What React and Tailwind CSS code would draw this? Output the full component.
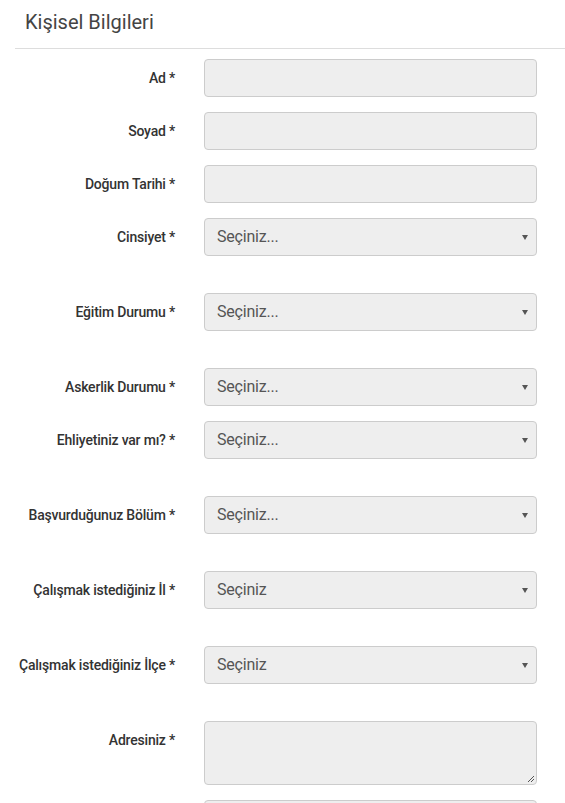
import React from 'react';

const fields = [
  { label: 'Ad *', type: 'input' },
  { label: 'Soyad *', type: 'input' },
  { label: 'Doğum Tarihi *', type: 'input' },
  { label: 'Cinsiyet *', type: 'select', value: 'Seçiniz...', gap: true },
  { label: 'Eğitim Durumu *', type: 'select', value: 'Seçiniz...', gap: true },
  { label: 'Askerlik Durumu *', type: 'select', value: 'Seçiniz...' },
  { label: 'Ehliyetiniz var mı? *', type: 'select', value: 'Seçiniz...', gap: true },
  { label: 'Başvurduğunuz Bölüm *', type: 'select', value: 'Seçiniz...', gap: true },
  { label: 'Çalışmak istediğiniz İl *', type: 'select', value: 'Seçiniz', gap: true },
  { label: 'Çalışmak istediğiniz İlçe *', type: 'select', value: 'Seçiniz', gap: true },
  { label: 'Adresiniz *', type: 'textarea' },
  { label: '', type: 'input' },
];

const font = { fontFamily: '"Liberation Sans Narrow", "Roboto", "Liberation Sans", sans-serif' };

function Field({ f }) {
  const box = 'w-[333px] bg-[#eeeeee] border border-[#cccccc] rounded-[4px]';
  return (
    <div className={`flex items-start ${f.gap ? 'mb-[37px]' : 'mb-[15px]'}`}>
      <label className="w-[175px] shrink-0 pt-[9px] text-right text-[14px] font-medium tracking-[-0.2px] text-[#333333] leading-[20px]">
        {f.label}
      </label>
      <div className="ml-[29px]">
        {f.type === 'input' && <div className={`${box} h-[38px]`} />}
        {f.type === 'textarea' && (
          <div className={`${box} h-[64px] relative`}>
            <svg className="absolute right-[1px] bottom-[1px]" width="9" height="9" viewBox="0 0 9 9">
              <path d="M8 2 L2 8 M8 5 L5 8" stroke="#555" strokeWidth="1" />
            </svg>
          </div>
        )}
        {f.type === 'select' && (
          <div className={`${box} h-[38px] flex items-center justify-between pl-[12px] pr-[8px]`}>
            <span className="text-[16px] tracking-[-0.2px] text-[#555555]">{f.value}</span>
            <svg width="6" height="5" viewBox="0 0 6 5">
              <path d="M0 0 H6 L3 5 Z" fill="#555" />
            </svg>
          </div>
        )}
      </div>
    </div>
  );
}

export default function App() {
  return (
    <div className="bg-white w-[565px] h-[803px] overflow-hidden" style={font}>
      <div className="pl-[15px]">
        <h3 className="pl-[10px] pt-[8px] pb-[12px] text-[20px] leading-[28px] text-[#444444] border-b border-[#dddddd]">
          Kişisel Bilgileri
        </h3>
      </div>
      <div className="pt-[10px]">
        {fields.map((f, i) => (
          <Field key={i} f={f} />
        ))}
      </div>
    </div>
  );
}
